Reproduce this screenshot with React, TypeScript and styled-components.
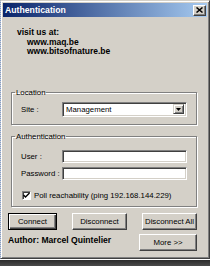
import React from "react";
import styled, { createGlobalStyle } from "styled-components";

const Global = createGlobalStyle`
  html, body { margin: 0; padding: 0; background: #d4d0c8; }
  body { font-family: "Liberation Sans", Arial, sans-serif; }
  * { box-sizing: border-box; }
`;

const Page = styled.div`
  width: 210px;
  height: 266px;
  display: flex;
  flex-direction: column;
  overflow: hidden;
`;

const Window = styled.div`
  width: 210px;
  height: 259px;
  background: #d4d0c8;
  border-top: 1px solid #d4d0c8;
  border-left: 1px dotted #7d9bd0;
  border-right: 1px solid #404040;
  border-bottom: 1px solid #404040;
  box-shadow: inset 1px 1px #ffffff, inset -1px -1px #808080;
  padding: 2px;
  display: flex;
  flex-direction: column;
`;

const TitleBar = styled.div`
  height: 14px;
  background: linear-gradient(to right, #0a246a, #a6caf0);
  display: flex;
  align-items: center;
  justify-content: space-between;
  padding: 0 1px 0 2px;
`;

const TitleText = styled.span`
  color: #ffffff;
  font-weight: bold;
  font-size: 8.7px;
  line-height: 14px;
`;

const CloseButton = styled.div`
  width: 13px;
  height: 11px;
  background: #d4d0c8;
  border-top: 1px solid #ffffff;
  border-left: 1px solid #ffffff;
  border-right: 1px solid #404040;
  border-bottom: 1px solid #404040;
  box-shadow: inset -1px -1px #808080;
  display: flex;
  align-items: center;
  justify-content: center;
`;

const Content = styled.div`
  flex: 1;
  display: flex;
  flex-direction: column;
  padding: 0 10px 0 5px;
`;

const Visit = styled.div`
  margin: 11px 0 0 9px;
  font-weight: bold;
  font-size: 8.5px;
  line-height: 9.5px;
  color: #000;
`;

const VisitLink = styled.div`
  padding-left: 10px;
`;

const Group = styled.fieldset<{ $top: number; $bottom: number }>`
  margin: ${(p) => p.$top}px 0 0 3px;
  padding: 0 9px ${(p) => p.$bottom}px 9px;
  border: 1px solid #808080;
  box-shadow: inset 1px 1px #ffffff, 1px 1px #ffffff;
  min-width: 0;
`;

const Legend = styled.legend`
  font-size: 7.8px;
  line-height: 10px;
  padding: 0 1px;
  margin-left: -6px;
  color: #000;
`;

const FieldRow = styled.div<{ $top: number }>`
  display: flex;
  align-items: center;
  margin-top: ${(p) => p.$top}px;
`;

const Label = styled.span`
  width: 41px;
  font-size: 7.8px;
  color: #000;
  flex: none;
`;

const Sunken = styled.div<{ $h: number }>`
  flex: 1;
  height: ${(p) => p.$h}px;
  background: #ffffff;
  border-top: 1px solid #808080;
  border-left: 1px solid #808080;
  border-right: 1px solid #ffffff;
  border-bottom: 1px solid #ffffff;
  box-shadow: inset 1px 1px #404040, inset -1px -1px #d4d0c8;
  display: flex;
  align-items: center;
  padding: 0 2px 0 3px;
  font-size: 7.8px;
  color: #000;
`;

const SelectText = styled.span`
  flex: 1;
`;

const ArrowButton = styled.div`
  width: 11px;
  height: 10px;
  background: #d4d0c8;
  border-top: 1px solid #d4d0c8;
  border-left: 1px solid #d4d0c8;
  border-right: 1px solid #404040;
  border-bottom: 1px solid #404040;
  box-shadow: inset 1px 1px #ffffff, inset -1px -1px #808080;
  display: flex;
  align-items: center;
  justify-content: center;
`;

const CheckRow = styled.label`
  display: flex;
  align-items: center;
  margin: 11px 0 0 1px;
  font-size: 7.8px;
  color: #000;
  white-space: nowrap;
`;

const CheckBox = styled.span`
  width: 9px;
  height: 9px;
  background: #ffffff;
  border-top: 1px solid #808080;
  border-left: 1px solid #808080;
  border-right: 1px solid #ffffff;
  border-bottom: 1px solid #ffffff;
  box-shadow: inset 1px 1px #404040;
  display: flex;
  align-items: center;
  justify-content: center;
  margin-right: 3px;
  flex: none;
`;

const ButtonRow = styled.div`
  display: flex;
  justify-content: space-between;
  margin-top: 6px;
`;

const Button = styled.div<{ $w: number; $default?: boolean }>`
  width: ${(p) => p.$w}px;
  height: 17px;
  background: #d4d0c8;
  font-size: 7.8px;
  color: #000;
  display: flex;
  align-items: center;
  justify-content: center;
  border: 1px solid ${(p) => (p.$default ? "#000000" : "#ffffff")};
  ${(p) =>
    p.$default
      ? "box-shadow: inset 1px 1px #ffffff, inset -1px -1px #404040, inset -2px -2px #808080;"
      : "border-right-color: #404040; border-bottom-color: #404040; box-shadow: inset -1px -1px #808080;"}
`;

const FooterRow = styled.div`
  display: flex;
  justify-content: space-between;
  align-items: flex-start;
  margin-top: 4px;
`;

const Author = styled.span`
  font-weight: bold;
  font-size: 8.6px;
  line-height: 10px;
  margin-top: 1px;
  color: #000;
`;

const Taskbar = styled.div`
  height: 7px;
  background: linear-gradient(to bottom, #ffffff 0, #ffffff 1px, #2b2b2b 1px, #4a4a4a 100%);
`;

export default function App() {
  return (
    <Page>
      <Global />
      <Window>
        <TitleBar>
          <TitleText>Authentication</TitleText>
          <CloseButton>
            <svg width="7" height="6" viewBox="0 0 7 6">
              <path d="M0.5 0.5 L6.5 5.5 M6.5 0.5 L0.5 5.5" stroke="#000" strokeWidth="1.5" />
            </svg>
          </CloseButton>
        </TitleBar>
        <Content>
          <Visit>
            <div>visit us at:</div>
            <VisitLink>www.maq.be</VisitLink>
            <VisitLink>www.bitsofnature.be</VisitLink>
          </Visit>

          <Group $top={31} $bottom={7}>
            <Legend>Location</Legend>
            <FieldRow $top={4}>
              <Label>Site :</Label>
              <Sunken $h={15}>
                <SelectText>Management</SelectText>
                <ArrowButton>
                  <svg width="5" height="3" viewBox="0 0 5 3">
                    <path d="M0 0 H5 L2.5 3 Z" fill="#000" />
                  </svg>
                </ArrowButton>
              </Sunken>
            </FieldRow>
          </Group>

          <Group $top={7} $bottom={6}>
            <Legend>Authentication</Legend>
            <FieldRow $top={8}>
              <Label>User :</Label>
              <Sunken $h={13} />
            </FieldRow>
            <FieldRow $top={4}>
              <Label>Password :</Label>
              <Sunken $h={13} />
            </FieldRow>
            <CheckRow>
              <CheckBox>
                <svg width="7" height="7" viewBox="0 0 7 7">
                  <path d="M0.5 3 L2.5 5 L6.5 1" stroke="#000" strokeWidth="1.4" fill="none" />
                </svg>
              </CheckBox>
              Poll reachability (ping 192.168.144.229)
            </CheckRow>
          </Group>

          <ButtonRow>
            <Button $w={49} $default>Connect</Button>
            <Button $w={55}>Disconnect</Button>
            <Button $w={55}>Disconnect All</Button>
          </ButtonRow>

          <FooterRow>
            <Author>Author: Marcel Quintelier</Author>
            <Button $w={58}>More &gt;&gt;</Button>
          </FooterRow>
        </Content>
      </Window>
      <Taskbar />
    </Page>
  );
}
